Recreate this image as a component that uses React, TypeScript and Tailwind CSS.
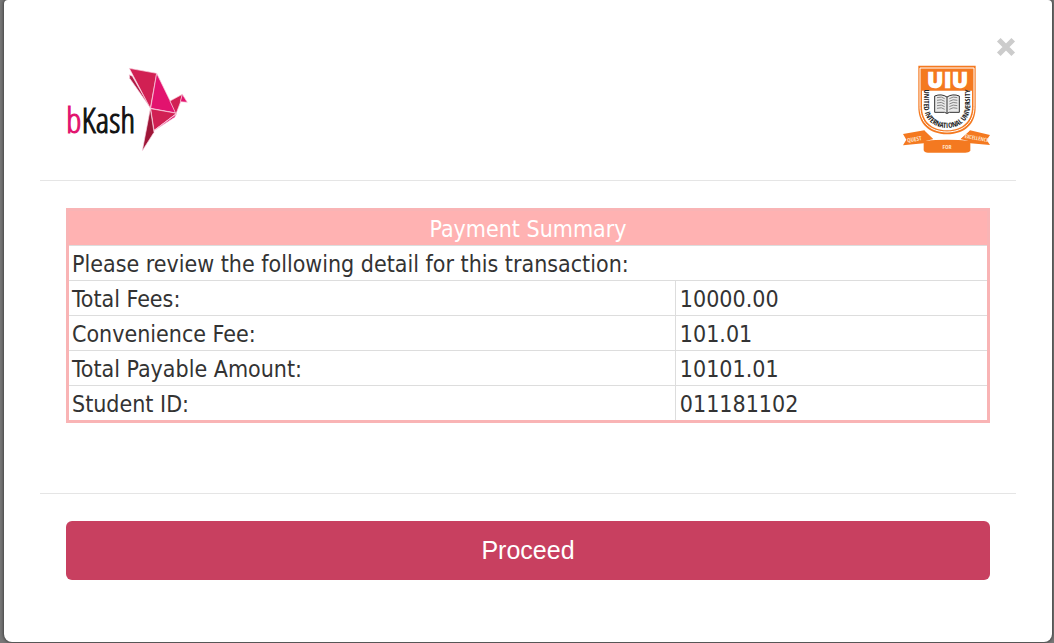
import React from "react";

const rows = [
  { label: "Total Fees:", value: "10000.00" },
  { label: "Convenience Fee:", value: "101.01" },
  { label: "Total Payable Amount:", value: "10101.01" },
  { label: "Student ID:", value: "011181102" },
];

function BkashLogo() {
  return (
    <svg viewBox="33 36 366 255" className="h-[85px] w-[122px]" role="img" aria-label="bKash">
      <text
        x="33"
        y="233"
        fontSize="106"
        className="font-['Open_Sans_Condensed_Light','Roboto_Condensed','Liberation_Sans_Narrow',sans-serif] font-light"
        fill="#111111"
        stroke="#111111"
        strokeWidth="3"
      >
        <tspan fill="#e2136e" stroke="#e2136e">b</tspan>Kash
      </text>
      <g stroke="#fbd3e2" strokeWidth="2" strokeLinejoin="round">
        <path d="M223 59 L232 64 L286 158 L224 70 Z" fill="#b01a45" />
        <path d="M223 40 L305 55 L286 160 Z" fill="#d12053" />
        <path d="M305 55 L363 174 L287 160 Z" fill="#e2136e" />
        <path d="M287 161 L365 175 L297 226 Z" fill="#d12053" />
        <path d="M286 161 L297 232 L262 287 Z" fill="#9e1638" />
        <path d="M345 138 L382 118 L377 140 L363 177 Z" fill="#d12053" />
        <path d="M382 118 L397 142 L376 140 Z" fill="#e2136e" />
        <path d="M365 176 L359 187 L297 227 Z" fill="#e2136e" />
      </g>
    </svg>
  );
}

function UiuLogo() {
  return (
    <svg
      viewBox="24 106 264 264"
      className="size-[88px]"
      role="img"
      aria-label="United International University"
    >
      <defs>
        <path id="shield-curve" d="M86 180 V226 C86 262 108 294 156 295 C204 294 226 262 226 226 V180" />
      </defs>
      <path
        d="M70 108 H242 V232 C242 282 211 313 156 314 C101 313 70 282 70 232 Z"
        fill="#f47920"
      />
      <path
        d="M75 115 H237 V231 C237 277 208 306 156 307 C104 306 75 277 75 231 Z"
        fill="none"
        stroke="#ffffff"
        strokeWidth="3"
      />
      <path
        d="M81 183 H231 V231 C231 272 205 301 156 302 C107 301 81 272 81 231 Z"
        fill="#ffffff"
      />
      <text
        x="121 158 195"
        y="171"
        textAnchor="middle"
        fontSize="58"
        className="font-['Liberation_Sans',sans-serif] font-bold"
        fill="#ffffff"
        stroke="#ffffff"
        strokeWidth="7"
      >
        UIU
      </text>
      <text
        fontSize="22"
        className="font-['Open_Sans_Condensed','Liberation_Sans_Narrow',sans-serif] font-bold"
        fill="#222222"
      >
        <textPath href="#shield-curve" startOffset="50%" textAnchor="middle">
          UNITED INTERNATIONAL UNIVERSITY
        </textPath>
      </text>
      <path
        d="M119 199 Q139 191 156 202 Q173 191 193 199 V248 H163 Q156 255 149 248 H119 Z"
        fill="#e9e9e9"
        stroke="#333333"
        strokeWidth="3"
      />
      <path d="M156 202 V250" stroke="#333333" strokeWidth="3" />
      <path
        d="M126 204 Q140 199 149 207 M126 212 Q140 207 149 215 M126 220 Q140 215 149 223 M126 228 Q140 223 149 231 M126 236 Q140 231 149 239 M163 207 Q174 199 187 204 M163 215 Q174 207 187 212 M163 223 Q174 215 187 220 M163 231 Q174 223 187 228 M163 239 Q174 231 187 236"
        fill="none"
        stroke="#888888"
        strokeWidth="3"
      />
      <path d="M24 313 L88 302 L118 331 L90 336 L86 341 L24 347 L34 330 Z" fill="#f47920" />
      <path d="M285 316 L225 302 L193 331 L222 336 L226 341 L285 346 L275 331 Z" fill="#f47920" />
      <path d="M90 302 L118 329 L90 336 M223 302 L193 329 L222 336" fill="none" stroke="#ffffff" strokeWidth="3" />
      <path d="M86 334 Q156 327 226 334 V364 Q221 369 211 369 H99 Q88 369 86 362 Z" fill="#f47920" />
      <g
        fill="#ffe3c9"
        fontSize="18"
        textAnchor="middle"
        className="font-['Open_Sans_Condensed','Liberation_Sans_Narrow',sans-serif] font-bold"
      >
        <text x="59" y="335" transform="rotate(-9 59 335)">QUEST</text>
        <text x="156" y="359">FOR</text>
        <text x="244" y="331" fontSize="16" transform="rotate(10 244 331)">EXCELLENCE</text>
      </g>
    </svg>
  );
}

export default function App() {
  return (
    <div className="bg-[#777777] pr-0.5 pb-px pl-1">
      <main
        role="dialog"
        aria-label="Payment Summary"
        className="relative rounded-t-[4px] rounded-b-lg bg-white px-9 pt-16 pb-[62px] shadow-[0_0_3px_1px_#444444]"
      >
        <button
          type="button"
          aria-label="Close"
          className="absolute top-7 right-9 flex h-[38px] w-5 items-center justify-center"
        >
          <svg viewBox="0 0 18 18" className="size-5 shrink-0" aria-hidden="true">
            <path d="M2.5 2.5 L15.5 15.5 M15.5 2.5 L2.5 15.5" stroke="#cccccc" strokeWidth="4.6" />
          </svg>
        </button>

        <header className="flex items-start justify-between border-b border-[#e5e5e5] pr-[25px] pb-[26px] pl-[26px]">
          <div className="pt-[3px]">
            <BkashLogo />
          </div>
          <div className="pt-px pb-px">
            <UiuLogo />
          </div>
        </header>

        <section className="border-b border-[#e5e5e5] px-[26px] pt-[27px] pb-[70px]">
          <table className="w-full border-collapse border-3 border-[#f9b4b5] text-left font-['DejaVu_Sans_Condensed','Noto_Sans',sans-serif] text-[23px] leading-8 text-[#333333]">
            <thead>
              <tr>
                <th
                  colSpan={2}
                  className="border-b border-[#dddddd] bg-[#ffb2b2] pt-0.5 text-center font-normal text-white"
                >
                  Payment Summary
                </th>
              </tr>
            </thead>
            <tbody>
              <tr>
                <td colSpan={2} className="border-b border-[#dddddd] px-[3px] pt-0.5">
                  Please review the following detail for this transaction:
                </td>
              </tr>
              {rows.map((row) => (
                <tr key={row.label} className="border-t border-[#dddddd]">
                  <th scope="row" className="w-[66%] border-r border-[#dddddd] px-[3px] pt-0.5 font-normal">
                    {row.label}
                  </th>
                  <td className="px-1 pt-0.5">{row.value}</td>
                </tr>
              ))}
            </tbody>
          </table>
        </section>

        <div className="px-[26px] pt-[27px]">
          <button
            type="button"
            className="h-[59px] w-full rounded-md bg-[#c84060] font-['Liberation_Sans',Arial,sans-serif] text-[25px] text-white"
          >
            Proceed
          </button>
        </div>
      </main>
    </div>
  );
}
